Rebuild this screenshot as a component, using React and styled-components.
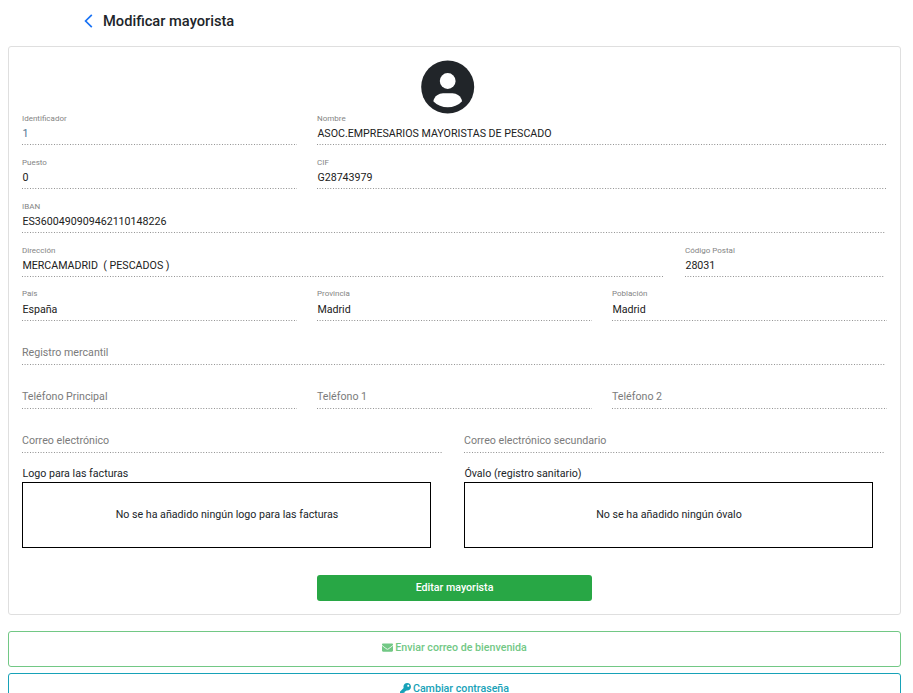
import React from "react";
import styled, { createGlobalStyle } from "styled-components";
import { FaEnvelope, FaKey } from "react-icons/fa";

const GlobalStyle = createGlobalStyle`
  * { box-sizing: border-box; }
  body {
    margin: 0;
    background: #fff;
    color: #212529;
    font-family: Roboto, "Liberation Sans", sans-serif;
    font-size: 10.66px;
    overflow: hidden;
  }
`;

const Page = styled.main`
  height: 693px;
  padding: 0 12px 0 8px;
  overflow: hidden;
`;

const Header = styled.header`
  display: flex;
  align-items: center;
  height: 46px;
  padding: 0 0 5px 76px;
`;

const BackIcon = styled.svg`
  width: 9px;
  height: 14px;
  margin-right: 10px;
`;

const Title = styled.h1`
  margin: 0;
  font-size: 14.67px;
  font-weight: 500;
  line-height: 20px;
`;

const Card = styled.section`
  height: 569px;
  padding: 13px 13px 0;
  border: 1px solid #dfdfdf;
  border-radius: 3px;
`;

const Avatar = styled.svg`
  display: block;
  width: 54px;
  height: 54px;
  margin: 0 0 -1px 399px;
`;

const Row = styled.div`
  display: grid;
  grid-template-columns: ${(p) => p.$columns};
  column-gap: ${(p) => p.$gap || 20}px;
  height: 44px;
`;

const Field = styled.div`
  display: flex;
  flex-direction: column;
  height: 32px;
  background: repeating-linear-gradient(
      to right,
      #959595 0 1px,
      #fff 1px 2px,
      #d0d0d0 2px 3px,
      #bcbcbc 3px 4px,
      #fff 4px 5px,
      #a8a8a8 5px 6px,
      #e4e4e4 6px 7px,
      #fff 7px 8px
    )
    left bottom / 100% 1px no-repeat;
`;

const Label = styled.span`
  height: 13px;
  font-size: 8px;
  line-height: ${(p) => (p.$raised ? 10 : 12)}px;
  color: #848484;
`;

const Value = styled.span`
  padding-left: 0.4px;
  line-height: 15px;
  white-space: pre;
  color: ${(p) => p.$color || "#212121"};
`;

const Placeholder = styled(Value)`
  padding: 12px 0 0;
  color: #7b7b7b;
`;

const Uploads = styled.div`
  display: grid;
  grid-template-columns: 409px 409px;
  column-gap: 33px;
`;

const UploadTitle = styled.div`
  height: 17px;
  padding-left: 0.4px;
  line-height: 17px;
`;

const UploadBox = styled.div`
  display: flex;
  align-items: center;
  justify-content: center;
  height: 66px;
  padding: 0 0 2px 1px;
  border: 1px solid #000;
`;

const SubmitButton = styled.button`
  display: block;
  width: 275px;
  height: 26px;
  margin: 27px 0 0 295px;
  padding: 0 0 1px;
  border: 0;
  border-radius: 3px;
  background: #28a745;
  color: #fff;
  font: 500 10.66px Roboto, sans-serif;
`;

const OutlineButton = styled.button`
  display: flex;
  align-items: center;
  justify-content: center;
  gap: 2px;
  width: 100%;
  height: 36px;
  margin-top: ${(p) => p.$top}px;
  padding: 0 0 ${(p) => p.$lift}px;
  border: 1px solid ${(p) => p.$color};
  border-radius: 3px;
  background: #fff;
  color: ${(p) => p.$color};
  font: 500 10.66px/12px Roboto, sans-serif;
`;

const ButtonText = styled.span`
  padding-top: 2px;
`;

const rows = [
  { columns: "275px 569px", fields: [["Identificador", "1", "#4f7390"], ["Nombre", "ASOC.EMPRESARIOS MAYORISTAS DE PESCADO"]] },
  { columns: "275px 569px", fields: [["Puesto", "0"], ["CIF", "G28743979"]] },
  { columns: "864px", fields: [["IBAN", "ES3600490909462110148226"]] },
  { columns: "641px 200px", gap: 22, fields: [["Dirección", "MERCAMADRID  ( PESCADOS )"], ["Código Postal", "28031"]] },
  { columns: "275px 275px 275px", raised: true, fields: [["País", "España"], ["Provincia", "Madrid"], ["Población", "Madrid"]] },
  { columns: "864px", fields: [["Registro mercantil"]] },
  { columns: "275px 275px 275px", fields: [["Teléfono Principal"], ["Teléfono 1"], ["Teléfono 2"]] },
  { columns: "421px 421px", gap: 21, fields: [["Correo electrónico"], ["Correo electrónico secundario"]] },
];

const uploads = [
  ["Logo para las facturas", "No se ha añadido ningún logo para las facturas"],
  ["Óvalo (registro sanitario)", "No se ha añadido ningún óvalo"],
];

export default function App() {
  return (
    <Page>
      <GlobalStyle />
      <Header>
        <BackIcon viewBox="0 0 9 14" fill="none" stroke="#1a73f5" strokeWidth="1.7">
          <path d="M7.8 0.8 L1.6 7 L7.8 13.2" />
        </BackIcon>
        <Title>Modificar mayorista</Title>
      </Header>
      <Card>
        <Avatar viewBox="0 0 54 54">
          <circle cx="26.7" cy="27" r="26.5" fill="#212529" />
          <circle cx="26.7" cy="21" r="7.9" fill="#fff" />
          <path d="M12.3 41.2 C13.5 36 18 33.3 22 33.3 H31.5 C35.5 33.3 40 36 41.1 41.2 C33.5 49.2 20 49.2 12.3 41.2Z" fill="#fff" />
        </Avatar>
        {rows.map((row, i) => (
          <Row key={i} $columns={row.columns} $gap={row.gap}>
            {row.fields.map(([label, value, color]) => (
              <Field key={label}>
                {value ? (
                  <>
                    <Label $raised={row.raised}>{label}</Label>
                    <Value $color={color}>{value}</Value>
                  </>
                ) : (
                  <Placeholder>{label}</Placeholder>
                )}
              </Field>
            ))}
          </Row>
        ))}
        <Uploads>
          {uploads.map(([title, text]) => (
            <div key={title}>
              <UploadTitle>{title}</UploadTitle>
              <UploadBox>{text}</UploadBox>
            </div>
          ))}
        </Uploads>
        <SubmitButton>Editar mayorista</SubmitButton>
      </Card>
      <OutlineButton $top={16} $lift={4} $color="#72c885">
        <FaEnvelope size={11} />
        <ButtonText>Enviar correo de bienvenida</ButtonText>
      </OutlineButton>
      <OutlineButton $top={6} $lift={6} $color="#17a2b8">
        <FaKey size={11} />
        <ButtonText>Cambiar contraseña</ButtonText>
      </OutlineButton>
    </Page>
  );
}
